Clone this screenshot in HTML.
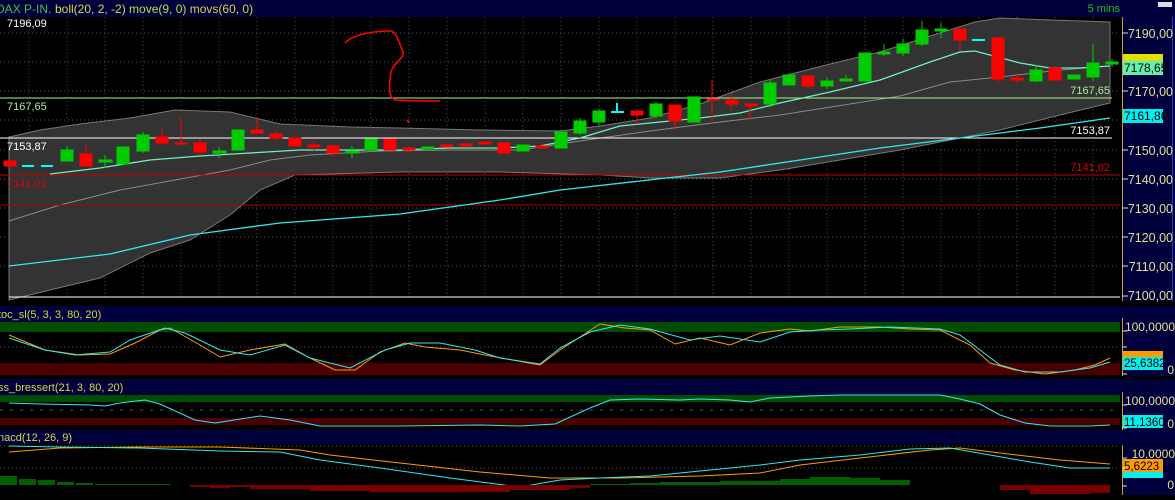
<!DOCTYPE html>
<html><head><meta charset="utf-8"><style>
html,body{margin:0;padding:0;background:#000;}
body{width:1175px;height:495px;overflow:hidden;font-family:"Liberation Sans",sans-serif;}
svg text{font-family:"Liberation Sans",sans-serif;}
</style></head><body>
<svg width="1175" height="495" xmlns="http://www.w3.org/2000/svg" shape-rendering="crispEdges">
<rect width="1175" height="495" fill="#000"/>
<rect x="0" y="0" width="1175" height="17" fill="#00003c"/>
<text x="-4" y="13" font-size="12" fill="#40c040">DAX P-IN.</text>
<text x="55" y="13" font-size="12" fill="#d8d840">boll(20, 2, -2) <tspan fill="#b0e040">move(9, 0)</tspan> <tspan fill="#d8d840">movs(60, 0)</tspan></text>
<text x="1120" y="12" font-size="11" fill="#20c020" text-anchor="end">5 mins</text>
<rect x="1158" y="2" width="14" height="5" fill="#ddd"/>
<g stroke="#555" stroke-dasharray="1,3" stroke-width="1">
<path d="M0 33H1120M0 62H1120M0 91H1120M0 120H1120M0 150H1120M0 179H1120M0 208H1120M0 237H1120M0 266H1120"/>
<path d="M29 17V300M67 17V300M105 17V300M143 17V300M181 17V300M219 17V300M257 17V300M295 17V300M333 17V300M371 17V300M409 17V300M447 17V300M485 17V300M523 17V300M561 17V300M599 17V300M637 17V300M675 17V300M713 17V300M751 17V300M789 17V300M827 17V300M865 17V300M903 17V300M941 17V300M979 17V300M1017 17V300M1055 17V300M1093 17V300"/>
</g>
<path shape-rendering="auto" d="M9 137L40 130L80 124L130 118L175 110L230 112L280 124L350 127L400 128L480 130L560 131L600 126L650 118L700 104L760 82L830 64L880 52L930 36L975 22L1000 18L1050 20L1110 22L1110 103L1060 115L1000 130L950 140L900 150L840 160L780 170L720 178L650 178L600 175L500 172L400 172L295 175L260 190L230 215L190 240L150 253L100 278L50 290L9 300Z" fill="#333" stroke="#777" stroke-width="1"/>
<polyline shape-rendering="auto" fill="none" stroke="#888" stroke-width="1" points="9,221 60,205 120,190 175,180 230,170 270,160 310,155 380,151 450,150 520,150 580,141 650,131 720,122 780,115 850,104 900,96 950,82 1000,77 1060,70 1110,66"/>
<line x1="0" y1="98" x2="1112" y2="98" stroke="#a8f090"/>
<line x1="0" y1="138" x2="1112" y2="138" stroke="#fff"/>
<line x1="0" y1="175" x2="1120" y2="175" stroke="#c00000"/>
<line x1="0" y1="205" x2="1120" y2="205" stroke="#b00000"/>
<line x1="9" y1="297" x2="1120" y2="297" stroke="#fff"/>
<polyline shape-rendering="auto" fill="none" stroke="#30e8f0" stroke-width="1.3" points="9,266 110,254 190,235 280,223 400,214 500,200 560,190 640,181 720,172 800,160 880,148 960,138 1040,128 1110,118"/>
<polyline shape-rendering="auto" fill="none" stroke="#70f0c0" stroke-width="1.3" points="50,174 100,168 150,160 200,156 250,153 300,150 350,150 400,150 450,148 500,148 540,146 580,138 620,126 660,122 700,118 740,113 780,103 830,92 880,80 930,62 960,52 975,51 990,55 1020,63 1050,68 1080,68 1110,66"/>
<g>
<g fill="#00cc00" stroke="#00cc00">
<rect x="61" y="150" width="12" height="11"/><line x1="67" y1="146" x2="67" y2="161"/>
<line x1="105" y1="155" x2="105" y2="168"/><rect x="99" y="160" width="13" height="2"/>
<rect x="117" y="147" width="12" height="17"/>
<rect x="137" y="135" width="12" height="16"/><line x1="143" y1="132" x2="143" y2="153"/>
<line x1="219" y1="147" x2="219" y2="158"/><rect x="213" y="151" width="13" height="2"/>
<rect x="232" y="130" width="12" height="20"/>
<line x1="352" y1="146" x2="352" y2="158"/><rect x="346" y="151" width="13" height="2"/>
<rect x="365" y="139" width="12" height="11"/>
<rect x="422" y="147" width="12" height="2"/>
<rect x="517" y="145" width="12" height="6"/>
<rect x="555" y="132" width="12" height="16"/>
<rect x="574" y="121" width="12" height="12"/><line x1="580" y1="118" x2="580" y2="135"/>
<rect x="593" y="111" width="12" height="11"/><line x1="599" y1="109" x2="599" y2="127"/>
<rect x="650" y="104" width="12" height="12"/><line x1="656" y1="102" x2="656" y2="118"/>
<rect x="688" y="97" width="12" height="25"/>
<rect x="764" y="83" width="12" height="21"/><line x1="770" y1="80" x2="770" y2="107"/>
<rect x="783" y="75" width="12" height="10"/>
<rect x="821" y="81" width="12" height="5"/><line x1="827" y1="77" x2="827" y2="89"/>
<rect x="840" y="79" width="12" height="2"/><line x1="846" y1="75" x2="846" y2="81"/>
<rect x="859" y="53" width="12" height="28"/>
<rect x="878" y="52" width="12" height="2"/><line x1="884" y1="44" x2="884" y2="56"/>
<rect x="897" y="44" width="12" height="9"/><line x1="903" y1="39" x2="903" y2="56"/>
<rect x="916" y="30" width="12" height="14"/><line x1="922" y1="21" x2="922" y2="46"/>
<rect x="935" y="29" width="12" height="2"/><line x1="941" y1="23" x2="941" y2="38"/>
<rect x="1030" y="70" width="12" height="11"/><line x1="1036" y1="65" x2="1036" y2="82"/>
<rect x="1068" y="75" width="12" height="4"/>
<rect x="1087" y="63" width="12" height="14"/><line x1="1093" y1="44" x2="1093" y2="81"/>
<rect x="1106" y="62" width="12" height="2"/><line x1="1112" y1="59" x2="1112" y2="67"/>
</g>
<g fill="#ff0000" stroke="#ff0000">
<rect x="4" y="161" width="12" height="5"/>
<rect x="80" y="154" width="12" height="12"/><line x1="86" y1="144" x2="86" y2="167"/>
<rect x="156" y="137" width="12" height="6"/><line x1="162" y1="127" x2="162" y2="145"/>
<rect x="175" y="143" width="12" height="1"/><line x1="181" y1="118" x2="181" y2="146"/>
<rect x="194" y="143" width="12" height="9"/><line x1="200" y1="140" x2="200" y2="155"/>
<rect x="251" y="130" width="12" height="3"/><line x1="257" y1="118" x2="257" y2="134"/>
<rect x="270" y="134" width="12" height="4"/><line x1="276" y1="130" x2="276" y2="140"/>
<rect x="289" y="138" width="12" height="8"/>
<rect x="308" y="145" width="12" height="2"/><line x1="314" y1="141" x2="314" y2="151"/>
<rect x="327" y="146" width="12" height="7"/><line x1="333" y1="144" x2="333" y2="157"/>
<rect x="384" y="139" width="12" height="11"/>
<rect x="403" y="148" width="12" height="2"/><line x1="409" y1="146" x2="409" y2="153"/>
<rect x="441" y="145" width="12" height="2"/>
<rect x="460" y="144" width="12" height="2"/>
<rect x="479" y="142" width="12" height="2"/>
<rect x="498" y="143" width="12" height="10"/>
<rect x="536" y="146" width="12" height="2"/><line x1="542" y1="143" x2="542" y2="149"/>
<rect x="631" y="111" width="12" height="4"/><line x1="637" y1="110" x2="637" y2="124"/>
<rect x="669" y="105" width="12" height="16"/><line x1="675" y1="105" x2="675" y2="130"/>
<rect x="707" y="99" width="12" height="1"/><line x1="712" y1="80" x2="712" y2="122"/>
<rect x="726" y="100" width="12" height="4"/><line x1="731" y1="94" x2="731" y2="111"/>
<rect x="745" y="104" width="12" height="2"/><line x1="750" y1="103" x2="750" y2="121"/>
<rect x="802" y="76" width="12" height="10"/><line x1="808" y1="76" x2="808" y2="88"/>
<rect x="954" y="29" width="12" height="11"/><line x1="960" y1="29" x2="960" y2="51"/>
<rect x="992" y="38" width="12" height="41"/><line x1="998" y1="37" x2="998" y2="83"/>
<rect x="1011" y="78" width="12" height="2"/><line x1="1017" y1="73" x2="1017" y2="83"/>
<rect x="1049" y="68" width="12" height="12"/><line x1="1055" y1="66" x2="1055" y2="80"/>
</g>
<g fill="#00ffff"><rect x="22" y="165" width="12" height="2"/><rect x="41" y="165" width="12" height="2"/><rect x="611" y="111" width="13" height="2"/><rect x="616" y="103" width="2" height="9"/><rect x="972" y="39" width="13" height="2"/></g>
</g>
<path shape-rendering="auto" d="M345 43C352 35 372 31 390 31C396 31 398 40 403 52C405 58 393 63 391 72C389 85 388 97 395 100C410 101 425 101 440 101M407 120L409 123" fill="none" stroke="#ff0000" stroke-width="1.6"/>
<g font-size="11">
<text x="7" y="27" fill="#fff">7196,09</text>
<text x="7" y="110" fill="#a8f090">7167,65</text>
<text x="7" y="150" fill="#fff">7153,87</text>
<text x="7" y="187" fill="#e00000">7141,02</text>
<text x="1110" y="94" fill="#a8f090" text-anchor="end">7167,65</text>
<text x="1110" y="134" fill="#fff" text-anchor="end">7153,87</text>
<text x="1110" y="171" fill="#e00000" text-anchor="end">7141,02</text>
</g>
<rect x="1122" y="17" width="53" height="284" fill="#00003c"/>
<line x1="1122.5" y1="17" x2="1122.5" y2="301" stroke="#d0a020"/>
<line x1="1172.5" y1="17" x2="1172.5" y2="301" stroke="#2040c0"/>
<g stroke="#ddd"><path d="M1122 33h6M1122 62h6M1122 91h6M1122 120h6M1122 150h6M1122 179h6M1122 208h6M1122 237h6M1122 266h6M1122 296h6"/></g>
<g font-size="12.5" fill="#e0e090" text-anchor="end">
<text x="1173" y="38">7190,00</text><text x="1173" y="96">7170,00</text><text x="1173" y="155">7150,00</text>
<text x="1173" y="184">7140,00</text><text x="1173" y="213">7130,00</text><text x="1173" y="242">7120,00</text>
<text x="1173" y="271">7110,00</text><text x="1173" y="300">7100,00</text></g>
<rect x="1123" y="54" width="40" height="8" fill="#e0e000"/>
<rect x="1123" y="61" width="40" height="14" fill="#60f0b0"/>
<text x="1124" y="72" font-size="12" fill="#000">7178,65</text>
<rect x="1123" y="109" width="40" height="14" fill="#00f0f0"/>
<text x="1124" y="120" font-size="12" fill="#000">7161,86</text>

<rect x="0" y="306" width="1175" height="16" fill="#00003c"/>
<text x="-2" y="318" font-size="11" fill="#d8d840">toc_sl(5, 3, 3, 80, 20)</text>
<rect x="0" y="322" width="1120" height="10" fill="#004d00"/>
<rect x="0" y="363" width="1120" height="12" fill="#4a0000"/>
<g stroke="#555" stroke-dasharray="1,3"><path d="M0 347H1120"/></g>
<polyline shape-rendering="auto" fill="none" stroke="#ff9a00" points="9,335 45,350 80,355 110,354 135,343 160,330 170,328 200,345 220,357 250,350 285,344 310,358 335,370 355,370 380,352 405,343 425,347 460,350 485,355 540,365 560,350 600,324 625,328 650,330 675,344 700,338 730,345 760,333 790,329 810,331 840,327 880,327 910,329 940,330 970,345 990,363 1015,370 1045,374 1075,370 1095,365 1110,358"/>
<polyline shape-rendering="auto" fill="none" stroke="#30e8f0" points="9,338 45,350 75,355 110,352 130,340 165,328 185,333 220,350 250,355 285,345 310,358 350,368 385,350 410,343 440,343 475,350 500,358 540,364 560,348 590,332 620,325 650,329 690,340 720,336 760,342 790,332 820,330 850,329 890,327 940,329 960,335 980,350 1000,365 1025,372 1060,372 1090,368 1110,362"/>
<rect x="1122" y="318" width="53" height="58" fill="#00003c"/>
<line x1="1122.5" y1="318" x2="1122.5" y2="376" stroke="#d0a020"/>
<g font-size="12" fill="#e0e090" text-anchor="end"><text x="1175" y="331">100,0000</text><text x="1174" y="374">0</text></g>
<rect x="1123" y="351" width="40" height="8" fill="#ff9a00"/>
<rect x="1123" y="357" width="40" height="13" fill="#00f0f0"/>
<text x="1124" y="367" font-size="11.5" fill="#000">25,6382</text>

<rect x="0" y="379" width="1175" height="16" fill="#00003c"/>
<text x="-2" y="391" font-size="11" fill="#d8d840">ss_bressert(21, 3, 80, 20)</text>
<rect x="0" y="395" width="1120" height="7" fill="#004d00"/>
<rect x="0" y="418" width="1120" height="7" fill="#4a0000"/>
<g stroke="#555" stroke-dasharray="3,7"><path d="M0 410H1120"/></g>
<polyline shape-rendering="auto" fill="none" stroke="#30e8f0" points="9,403 40,404 90,405 105,406 120,403 145,400 160,404 195,420 215,423 260,416 290,420 320,426 400,426 480,425 520,426 555,424 590,408 610,400 640,399 680,400 700,399 730,400 750,402 770,398 810,396 840,395 940,395 960,399 980,404 1000,415 1025,423 1050,426 1090,426 1110,425"/>
<rect x="1122" y="392" width="53" height="38" fill="#00003c"/>
<line x1="1122.5" y1="392" x2="1122.5" y2="430" stroke="#d0a020"/>
<g font-size="12" fill="#e0e090" text-anchor="end"><text x="1175" y="405">100,0000</text><text x="1174" y="428">0</text></g>
<rect x="1123" y="415" width="40" height="13" fill="#00f0f0"/>
<text x="1124" y="426" font-size="11.5" fill="#000">11,1360</text>

<rect x="0" y="430" width="1175" height="14" fill="#00003c"/>
<text x="-2" y="441" font-size="11" fill="#d8d840">nacd(12, 26, 9)</text>
<g stroke="#555" stroke-dasharray="1,3"><path d="M0 446H1120M0 468H1120"/></g>
<polyline shape-rendering="auto" fill="none" stroke="#ff9a00" points="9,452 60,448 140,447 220,447 300,450 330,455 400,463 480,472 550,478 620,478 700,476 760,473 800,465 860,458 930,450 960,448 1000,453 1060,460 1110,464"/>
<polyline shape-rendering="auto" fill="none" stroke="#30e8f0" points="9,446 60,447 140,448 220,451 280,452 320,460 380,468 450,478 520,487 560,480 600,478 650,476 700,471 760,465 800,460 860,455 910,449 950,448 990,455 1030,462 1070,468 1110,468"/>
<g fill="#006000">
<rect x="0" y="476" width="17" height="9"/><rect x="19" y="479" width="17" height="6"/><rect x="38" y="480" width="17" height="5"/><rect x="57" y="482" width="17" height="3"/><rect x="76" y="483" width="17" height="2"/><rect x="95" y="484" width="75" height="1"/>
<rect x="590" y="484" width="40" height="1"/><rect x="630" y="483" width="30" height="2"/><rect x="660" y="482" width="60" height="3"/><rect x="720" y="481" width="60" height="4"/><rect x="780" y="479" width="30" height="6"/><rect x="810" y="477" width="40" height="8"/><rect x="850" y="478" width="30" height="7"/><rect x="880" y="480" width="20" height="5"/><rect x="900" y="480" width="10" height="5"/></g>
<g fill="#7a0000">
<rect x="190" y="485" width="60" height="2"/><rect x="210" y="485" width="20" height="3"/><rect x="250" y="485" width="60" height="4"/><rect x="310" y="485" width="60" height="6"/><rect x="370" y="485" width="140" height="7"/><rect x="510" y="485" width="60" height="5"/><rect x="570" y="485" width="20" height="3"/>
<rect x="1000" y="485" width="30" height="5"/><rect x="1030" y="485" width="60" height="9"/><rect x="1090" y="485" width="20" height="8"/></g>
<rect x="1122" y="445" width="53" height="50" fill="#00003c"/>
<line x1="1122.5" y1="445" x2="1122.5" y2="495" stroke="#d0a020"/>
<g font-size="12" fill="#e0e090" text-anchor="end"><text x="1175" y="458">10,0000</text><text x="1174" y="489">0</text></g>
<rect x="1123" y="470" width="40" height="8" fill="#00f0f0"/>
<rect x="1123" y="459" width="40" height="13" fill="#ff9a00"/>
<text x="1124" y="470" font-size="11.5" fill="#000">5,6223</text>
<g stroke="#ddd"><path d="M1122 331h5M1122 347h5M1122 374h5M1122 405h5M1122 428h5M1122 458h5M1122 468h5M1122 486h5"/></g>
</svg>
</body></html>
